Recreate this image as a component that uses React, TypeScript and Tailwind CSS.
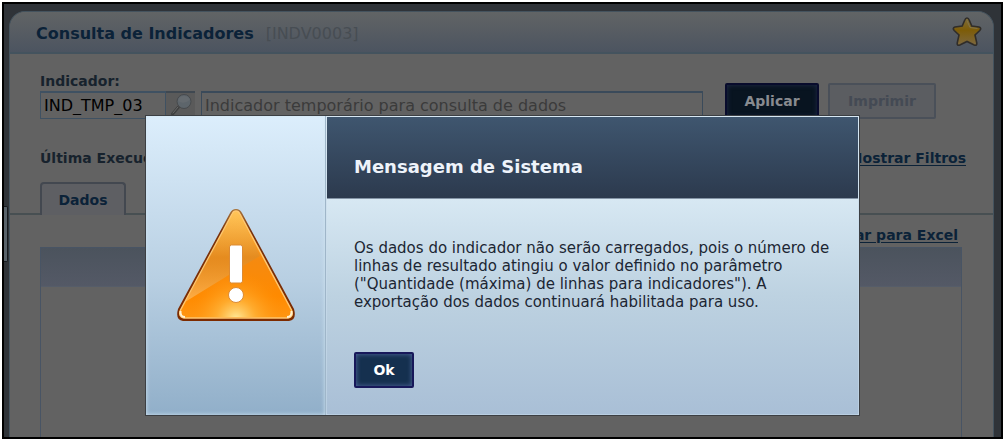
import React, { useState } from 'react'

const IconeEstrela = () => (
  <svg width="32" height="32" viewBox="0 0 32 32" aria-hidden="true">
    <defs>
      <linearGradient id="estrela" x1="0" y1="0" x2="0" y2="1">
        <stop offset="0" stopColor="#7d6d3c" />
        <stop offset="0.45" stopColor="#7d5c08" />
        <stop offset="1" stopColor="#7c6840" />
      </linearGradient>
    </defs>
    <path
      d="M16 2 Q17.5 2 18.2 4 L20.8 10 L28 11 Q31 12 28.8 14.5 L24 19 L25.8 27 Q26 30 23.2 29 L16 25.5 L8.8 29 Q6 30 6.2 27 L8 19 L3.2 14.5 Q1 12 4 11 L11.2 10 L13.8 4 Q14.5 2 16 2 Z"
      fill="url(#estrela)"
      stroke="#302d29"
      strokeWidth="1.6"
    />
    <path d="M16 4.5 L19 11.5 L26.5 12.5" fill="none" stroke="#81734a" strokeWidth="1" />
  </svg>
)

const IconeLupa = () => (
  <svg width="24" height="24" viewBox="0 0 24 24" aria-hidden="true">
    <path d="M9.5 13 L3.5 20" stroke="#3f4040" strokeWidth="3" strokeLinecap="round" />
    <path d="M9 13 L4 19" stroke="#6a6a6a" strokeWidth="1" strokeLinecap="round" />
    <circle cx="15" cy="7.5" r="7" fill="#5d656b" stroke="#474a4d" strokeWidth="1" />
    <path d="M9 7 Q14.5 11 21 6 Q19.5 2 15 2 Q10 2 9 7 Z" fill="#656b70" />
  </svg>
)

const IconeAlerta = () => (
  <svg width="120" height="114" viewBox="0 0 120 114" aria-hidden="true">
    <defs>
      <linearGradient id="alerta" x1="0" y1="0" x2="0" y2="1">
        <stop offset="0" stopColor="#ffc04e" />
        <stop offset="0.45" stopColor="#f58a10" />
        <stop offset="0.8" stopColor="#ff8a00" />
        <stop offset="1" stopColor="#ff9612" />
      </linearGradient>
      <radialGradient id="brilho" gradientUnits="userSpaceOnUse" cx="60" cy="110" r="50">
        <stop offset="0" stopColor="#ffeb9c" />
        <stop offset="0.4" stopColor="#ffb63c" stopOpacity="0.7" />
        <stop offset="1" stopColor="#ff8a00" stopOpacity="0" />
      </radialGradient>
      <linearGradient id="reflexo" x1="0" y1="0" x2="0" y2="1">
        <stop offset="0" stopColor="#ffd070" stopOpacity="0.3" />
        <stop offset="0.5" stopColor="#d58b2c" stopOpacity="0.5" />
        <stop offset="1" stopColor="#ffb95c" stopOpacity="0.8" />
      </linearGradient>
      <linearGradient id="contorno" x1="0" y1="0" x2="0" y2="1">
        <stop offset="0" stopColor="#a9753c" />
        <stop offset="0.2" stopColor="#79310b" />
        <stop offset="1" stopColor="#7d2b00" />
      </linearGradient>
    </defs>
    <path
      d="M60 0 Q64 0 66 4 L118 100 Q121 111 113 112 L7 112 Q-1 111 2 100 L54 4 Q56 0 60 0 Z"
      fill="url(#contorno)"
    />
    <path
      d="M60 2 Q62.5 2 64 5 L115.5 101 Q118 108 112 109 L8 109 Q2 108 4.5 101 L56 5 Q57.5 2 60 2 Z"
      fill="url(#alerta)"
      stroke="#ffc870"
      strokeWidth="1.5"
    />
    <path d="M7 108 L113 108 L85 56 L35 56 Z" fill="url(#brilho)" />
    <path d="M60 3 Q62 3 63 5 L84 47 Q66 57 48 69 Q30 80 9 93 L56 6 Q58 3 60 3 Z" fill="url(#reflexo)" />
    <path d="M4.5 102 Q4 108 9 108 M115.5 102 Q116 108 111 108" fill="none" stroke="#fff1cf" strokeWidth="2" />
    <rect x="53.5" y="36" width="13" height="38" rx="2" fill="#fff" stroke="#db8b35" strokeWidth="1" />
    <circle cx="60" cy="86" r="7.5" fill="#fff" stroke="#db8b35" strokeWidth="1" />
  </svg>
)

const MensagemSistema = ({ aoFechar }: { aoFechar: () => void }) => (
  <div className="fixed inset-0 flex items-start justify-center pt-[115px] pr-[18px] pl-4">
    <div
      role="dialog"
      aria-labelledby="titulo-mensagem"
      className="flex w-full max-w-[715px] border border-[#3c3f43] bg-[#c3d7e6]"
    >
      <div className="flex w-[180px] shrink-0 items-center justify-center border-r border-[#9fb6c9] bg-linear-to-b from-[#dceefc] via-[#b8cfe2] via-55% to-[#91afc9] inset-shadow-[0_0_4px_#d3e6f2]">
        <IconeAlerta />
      </div>
      <div className="flex flex-1 flex-col bg-linear-to-b from-[#dceaf4] to-[#a9bfd6] p-px inset-shadow-[0_0_4px_#d3e6f2]">
        <div className="border-b border-[#8494a6] bg-linear-to-b from-[#3f566f] to-[#2c3a4e] px-[27px] pt-[38px] pb-[19px]">
          <h2 id="titulo-mensagem" className="text-lg leading-6 font-bold text-[#eef3fa]">
            Mensagem de Sistema
          </h2>
        </div>
        <div className="bg-linear-to-b from-[#d7e8f3] via-[#bdd2e1] via-45% to-[#a9bfd6] pt-10 pr-5 pb-[26px] pl-[27px]">
          <p className="text-[15px] leading-[18px] text-[#1c2633]">
            Os dados do indicador não serão carregados, pois o número de linhas de resultado atingiu o valor definido no
            parâmetro ("Quantidade (máxima) de linhas para indicadores"). A exportação dos dados continuará habilitada
            para uso.
          </p>
          <button
            onClick={aoFechar}
            className="mt-[41px] h-9 w-[60px] rounded-xs border-2 border-[#17185a] bg-[#15304f] text-sm font-bold text-white inset-shadow-[0_0_5px_#5068a0]"
          >
            Ok
          </button>
        </div>
      </div>
    </div>
  </div>
)

const App = () => {
  const [mensagemAberta, setMensagemAberta] = useState(true)
  const [codigo, setCodigo] = useState('IND_TMP_03')

  return (
    <div className="flex min-h-screen bg-white pt-[2px] pr-1 pb-1 pl-[2px] font-['DejaVu_Sans',Verdana,sans-serif] text-sm text-[#17222d]">
      <div className="relative flex flex-1 border-2 border-black bg-[#2f3338] pt-[7px] pr-[7px] pl-[5px]">
        <button
          aria-label="Abrir menu"
          className="absolute top-[202px] left-0 h-14 w-1 rounded-r-xs border border-l-0 border-[#161b20] bg-[#59636b]"
        />

        <main className="flex flex-1 flex-col rounded-t-2xl border border-b-0 border-[#44535e] bg-[#626262]">
          <header className="flex h-[42px] items-center justify-between rounded-t-2xl border-b-2 border-[#44535e] bg-linear-to-b from-[#616465] to-[#4c5460] pr-[10px] pl-[26px]">
            <h1 className="flex gap-3 pt-1 text-base font-bold text-[#0b2238]">
              Consulta de Indicadores <span className="font-normal text-[#474d53]">[INDV0003]</span>
            </h1>
            <button aria-label="Adicionar aos favoritos">
              <IconeEstrela />
            </button>
          </header>

          <section className="flex items-end pt-[18px] pr-[57px] pl-[30px]">
            <div>
              <label htmlFor="indicador" className="block pb-px leading-[18px] font-bold">
                Indicador:
              </label>
              <div className="flex">
                <input
                  id="indicador"
                  value={codigo}
                  onChange={(e) => setCodigo(e.target.value)}
                  className="h-7 w-[126px] border border-t-2 border-[#3f5162] bg-[#626262] px-[3px] text-base text-black"
                />
                <button
                  aria-label="Pesquisar indicador"
                  className="flex h-7 w-[29px] items-center justify-center border-t-2 border-[#3f4851] bg-[#5a5a5a]"
                >
                  <IconeLupa />
                </button>
              </div>
            </div>
            <input
              aria-label="Descrição do indicador"
              readOnly
              value="Indicador temporário para consulta de dados"
              className="ml-[6px] h-7 min-w-0 flex-1 border border-t-2 border-[#3a4a5a] bg-[#626262] px-[3px] text-base text-[#3b3b3b]"
            />
            <button className="ml-[22px] h-9 w-[94px] rounded-xs border-2 border-[#080b2c] bg-[#081420] font-bold text-[#888b90] inset-shadow-[0_0_5px_#20294a]">
              Aplicar
            </button>
            <button
              disabled
              className="ml-[9px] h-9 w-[108px] rounded-xs border-2 border-[#4a5059] bg-[#5b5d61] font-bold text-[#444a54]"
            >
              Imprimir
            </button>
          </section>

          <div className="flex justify-between pt-[30px] pr-[27px] pl-[30px] leading-[18px] font-bold">
            <span>Última Execução:</span>
            <a href="#filtros" className="text-[#0b2238] underline underline-offset-2">
              Mostrar Filtros
            </a>
          </div>

          <div className="mt-[15px] border-b-2 border-[#474f52] pl-[30px]">
            <button className="-mb-[2px] block h-[33px] w-[86px] rounded-t-sm border-2 border-b-0 border-[#434850] bg-[#5e5f63] font-bold text-[#0b2238]">
              Dados
            </button>
          </div>

          <div className="flex flex-1 flex-col pt-[11px] pr-[31px] pl-[30px]">
            <a
              href="#excel"
              className="mr-1 self-end leading-[18px] font-bold text-[#0b2238] underline underline-offset-2"
            >
              Exportar para Excel
            </a>
            <div className="mt-[3px] flex-1 border border-b-0 border-[#485464]">
              <div className="h-[39px] border-b border-[#565d69] bg-linear-to-b from-[#4b535d] to-[#545966]" />
            </div>
          </div>
        </main>
      </div>

      {mensagemAberta && <MensagemSistema aoFechar={() => setMensagemAberta(false)} />}
    </div>
  )
}

export default App
